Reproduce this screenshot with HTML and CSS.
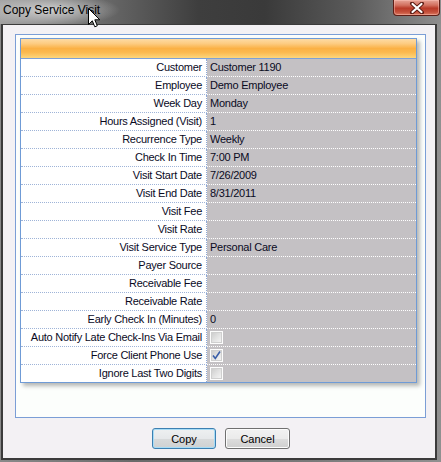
FILE: index.html
```html
<!DOCTYPE html>
<html>
<head>
<meta charset="utf-8">
<link rel="stylesheet" href="styles.css">
</head>
<body>
<div class="window">
  <div class="titlebar">
    <span class="title">Copy Service Visit</span>
    <div class="close">
      <svg width="16" height="12" viewBox="0 0 16 12">
        <path d="M3 1.5 L13 10.5 M13 1.5 L3 10.5" stroke="#5a1a12" stroke-width="4" stroke-linecap="round"/>
        <path d="M3.5 2 L12.5 10 M12.5 2 L3.5 10" stroke="#ffffff" stroke-width="2.2" stroke-linecap="round"/>
      </svg>
    </div>
    <svg class="cursor" width="13" height="21" viewBox="0 0 13 21">
      <path d="M0.5 0.5 L0.5 16.5 L4.3 12.8 L6.8 18.8 L9.3 17.8 L6.8 11.8 L11.8 11.8 Z" fill="#ffffff" stroke="#000000" stroke-width="1" stroke-linejoin="miter"/>
    </svg>
  </div>
  <div class="client">
    <div class="panel">
      <div class="grid">
        <div class="header"></div>
        <div class="row"><div class="label">Customer</div><div class="value">Customer 1190</div></div>
        <div class="row"><div class="label">Employee</div><div class="value">Demo Employee</div></div>
        <div class="row"><div class="label">Week Day</div><div class="value">Monday</div></div>
        <div class="row"><div class="label">Hours Assigned (Visit)</div><div class="value">1</div></div>
        <div class="row"><div class="label">Recurrence Type</div><div class="value">Weekly</div></div>
        <div class="row"><div class="label">Check In Time</div><div class="value">7:00 PM</div></div>
        <div class="row"><div class="label">Visit Start Date</div><div class="value">7/26/2009</div></div>
        <div class="row"><div class="label">Visit End Date</div><div class="value">8/31/2011</div></div>
        <div class="row"><div class="label">Visit Fee</div><div class="value"></div></div>
        <div class="row"><div class="label">Visit Rate</div><div class="value"></div></div>
        <div class="row"><div class="label">Visit Service Type</div><div class="value">Personal Care</div></div>
        <div class="row"><div class="label">Payer Source</div><div class="value"></div></div>
        <div class="row"><div class="label">Receivable Fee</div><div class="value"></div></div>
        <div class="row"><div class="label">Receivable Rate</div><div class="value"></div></div>
        <div class="row"><div class="label">Early Check In (Minutes)</div><div class="value">0</div></div>
        <div class="row"><div class="label">Auto Notify Late Check-Ins Via Email</div><div class="value"><span class="check"></span></div></div>
        <div class="row"><div class="label">Force Client Phone Use</div><div class="value"><span class="check checked"><svg width="11" height="11" viewBox="0 0 11 11"><path d="M2 5.5 L4.3 8.5 L9 1.5" fill="none" stroke="#3a5ea8" stroke-width="1.6"/></svg></span></div></div>
        <div class="row last"><div class="label">Ignore Last Two Digits</div><div class="value"><span class="check"></span></div></div>
      </div>
    </div>
    <div class="buttons">
      <button class="btn default">Copy</button>
      <button class="btn">Cancel</button>
    </div>
  </div>
</div>
</body>
</html>
```
FILE: styles.css
```css
html, body {
  margin: 0;
  padding: 0;
}
body {
  width: 441px;
  height: 462px;
  overflow: hidden;
  font-family: "Liberation Sans", Arial, sans-serif;
}
.window {
  width: 441px;
  height: 462px;
  background: linear-gradient(to right, #8a8a8a, #6a6a6a 30%, #7a7a7a 70%, #909090);
}
.titlebar {
  position: relative;
  height: 24px;
  display: flex;
  align-items: flex-start;
  background:
    radial-gradient(ellipse 70px 16px at 50px 10px, rgba(220,220,220,0.85), rgba(200,200,200,0) 100%),
    linear-gradient(to right, #a2a2a2 0%, #6c6c6c 22%, #3e3e3e 45%, #3a3a3a 60%, #5a5a5a 80%, #8e8e8e 100%);
}
.title {
  padding: 3px 0 0 3px;
  font-size: 12px;
  line-height: 15px;
  color: #000;
}
.close {
  margin-left: auto;
  margin-right: 1px;
  width: 47px;
  height: 16px;
  box-sizing: border-box;
  border: 1px solid #5e1e16;
  border-top: none;
  border-radius: 0 0 4px 4px;
  background: linear-gradient(to bottom, #e7a497 0%, #d2705f 35%, #b93a28 55%, #c4503b 80%, #dc7a60 100%);
  box-shadow: inset 0 0 0 1px rgba(255,200,190,0.45);
  display: flex;
  align-items: center;
  justify-content: center;
}
.cursor {
  position: absolute;
  left: 88px;
  top: 8px;
  z-index: 5;
}
.client {
  margin: 0 4px 2px 1px;
  height: 433px;
  border: 2px solid #3b3b3b;
  border-top-width: 1px;
  background: #f3f1f4;
}
.panel {
  margin: 9px 9px 0 12px;
  height: 384px;
  box-sizing: border-box;
  border: 1px solid #7b9ed6;
  background: #fcfefc;
  padding: 3px 0 0 4px;
}
.grid {
  width: 397px;
  box-sizing: border-box;
  border: 1px solid #6f9bd6;
  background: #fff;
  box-shadow: 3px 3px 4px rgba(0,0,0,0.28);
}
.header {
  height: 20px;
  box-sizing: border-box;
  border-bottom: 1px solid #7da0d6;
  background: linear-gradient(to bottom, #fedba4 0%, #fdcb80 25%, #fbb145 50%, #fbb94f 70%, #fdd67c 100%);
}
.row {
  display: grid;
  grid-template-columns: 186px 1fr;
  height: 18px;
}
.row.last {
  height: 17px;
}
.label, .value {
  box-sizing: border-box;
  font-size: 11px;
  line-height: 17px;
  color: #0a0a1e;
  white-space: nowrap;
  letter-spacing: -0.25px;
}
.label {
  text-align: right;
  padding-right: 4px;
  border-right: 1px dotted #8ea8d6;
  border-bottom: 1px dotted #9fb4d8;
}
.value {
  background: #c4c1c4;
  padding-left: 3px;
  border-bottom: 1px dotted #ffffff;
  display: flex;
  align-items: center;
}
.row.last .label, .row.last .value {
  border-bottom: none;
}
.check {
  width: 13px;
  height: 13px;
  box-sizing: border-box;
  border: 1px solid #fdfdfd;
  background: linear-gradient(135deg, #c9c9c9 0%, #e2e2e2 50%, #f7f7f7 100%);
  box-shadow: inset 0 0 0 1px #cfcfcf;
  display: flex;
  align-items: center;
  justify-content: center;
}
.buttons {
  display: flex;
  justify-content: center;
  gap: 9px;
  padding-left: 4px;
  margin-top: 10px;
}
.btn {
  width: 65px;
  height: 21px;
  box-sizing: border-box;
  padding: 0;
  font-family: "Liberation Sans", Arial, sans-serif;
  font-size: 11px;
  color: #000;
  border: 1px solid #707070;
  border-radius: 3px;
  background: linear-gradient(to bottom, #f2f2f2 0%, #ebebeb 50%, #dddddd 51%, #cfcfcf 100%);
  box-shadow: inset 0 0 0 1px #fcfcfc;
}
.btn.default {
  width: 64px;
  border-color: #3c7fb1;
  box-shadow: inset 0 0 0 1px #a7dcf6;
  background: linear-gradient(to bottom, #eef0f1 0%, #e6e8ea 50%, #d8dadb 51%, #cfd1d2 100%);
}
```
